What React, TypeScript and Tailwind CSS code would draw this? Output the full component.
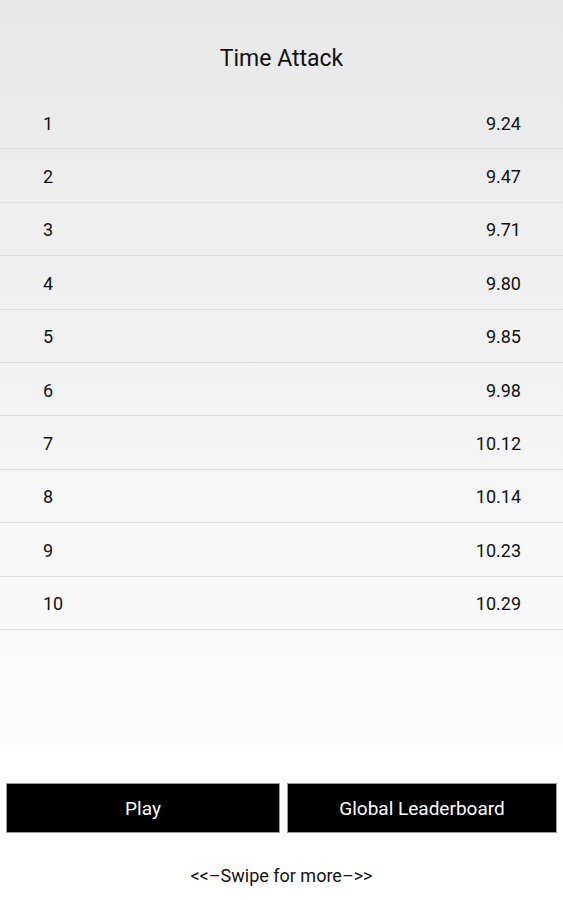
import React from "react";

const scores = ["9.24", "9.47", "9.71", "9.80", "9.85", "9.98", "10.12", "10.14", "10.23", "10.29"];

export default function App() {
  return (
    <div className="w-[563px] h-[900px] flex flex-col bg-white text-[#111]" style={{ fontFamily: "Roboto, 'Noto Sans', sans-serif" }}>
      <div className="h-[752px] bg-gradient-to-b from-[#e8e8e8] to-[#fdfdfd] flex flex-col">
        <div className="h-[96px] pt-[44px] text-center text-[23px] leading-[30px]">Time Attack</div>
        {scores.map((s, i) => (
          <div key={i} className="h-[53.4px] pt-[2px] border-b border-[#dfdfdf] flex items-center justify-between pl-[43px] pr-[42px] text-[18px]">
            <span>{i + 1}</span>
            <span>{s}</span>
          </div>
        ))}
      </div>
      <div className="flex gap-[7px] pl-[6px] pr-[6px] mt-[31px]">
        <button className="w-[274px] h-[50px] pt-[2px] bg-black border border-[#9a9a9a] text-white text-[19px]">Play</button>
        <button className="flex-1 h-[50px] pt-[2px] bg-black border border-[#9a9a9a] text-white text-[19px]">Global Leaderboard</button>
      </div>
      <div className="mt-[31px] text-center text-[18px] leading-[24px]">&lt;&lt;–Swipe for more–&gt;&gt;</div>
    </div>
  );
}
